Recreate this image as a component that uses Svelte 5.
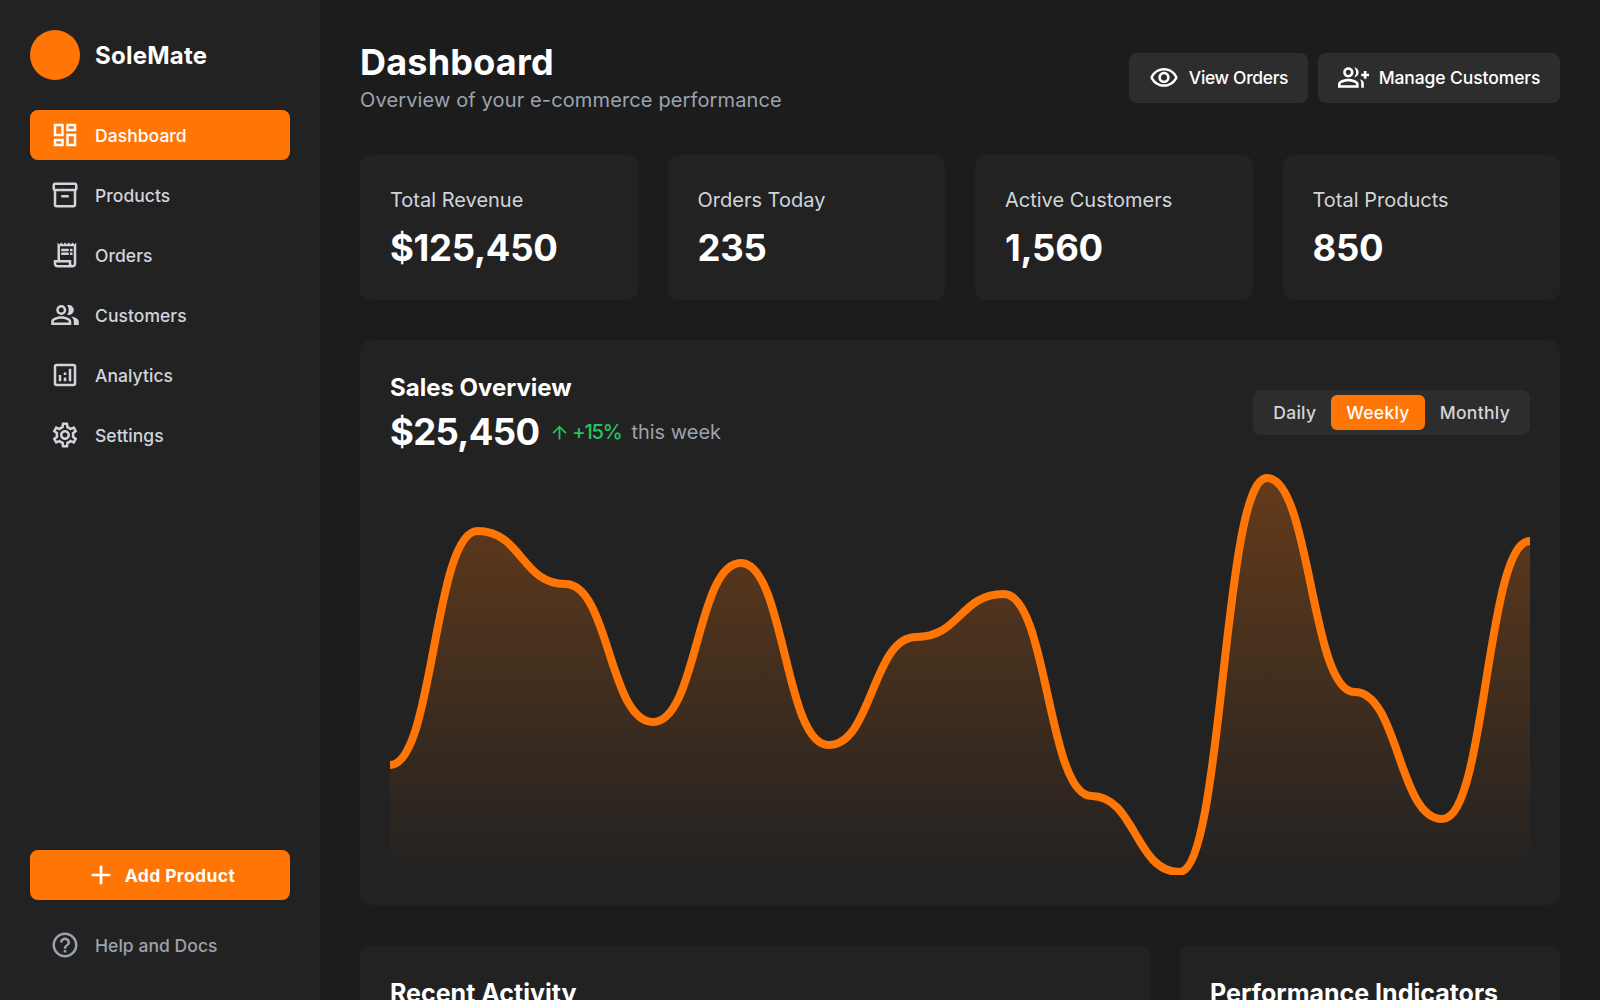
<script lang="ts">
  const points = [765, 531, 584, 722, 563, 745, 637, 594, 796, 872, 478, 692, 819, 541];
  const top = 470;
  const stepX = 1140 / 13;

  // material outlined glyphs, all on a 24 grid
  const icons: Record<string, string> = {
    dashboard: "M19 5v2h-4V5h4M9 5v6H5V5h4m10 8v6h-4v-6h4M9 17v2H5v-2h4M21 3h-8v6h8V3zM11 3H3v10h8V3zm10 8h-8v10h8V11zm-10 4H3v6h8v-6z",
    inventory: "M20 2H4c-1 0-2 .9-2 2v3.01c0 .72.43 1.34 1 1.69V20c0 1.1 1.1 2 2 2h14c.9 0 2-.9 2-2V8.7c.57-.35 1-.97 1-1.69V4c0-1.1-1-2-2-2zm-1 18H5V9h14v11zm1-13H4V4h16v3zM9 12h6v2H9z",
    receipt: "M19.5 3.5 18 2l-1.5 1.5L15 2l-1.5 1.5L12 2l-1.5 1.5L9 2 7.5 3.5 6 2v14H3v3c0 1.66 1.34 3 3 3h12c1.66 0 3-1.34 3-3V2l-1.5 1.5zM15 20H6c-.55 0-1-.45-1-1v-1h10v2zm4-1c0 .55-.45 1-1 1s-1-.45-1-1v-3H8V5h11v14zM9 7h6v2H9zM16 7h2v2h-2zM9 10h6v2H9zM16 10h2v2h-2z",
    group: "M16.67 13.13C18.04 14.06 19 15.32 19 17v3h4v-3c0-2.18-3.57-3.47-6.33-3.87zM9 4a4 4 0 1 0 0 8 4 4 0 0 0 0-8zm0 6a2 2 0 1 1 0-4 2 2 0 0 1 0 4zM15 12c2.21 0 4-1.79 4-4s-1.79-4-4-4c-.47 0-.91.1-1.33.24C14.5 5.27 15 6.58 15 8s-.5 2.73-1.33 3.76c.42.14.86.24 1.33.24zM9 13c-2.67 0-8 1.34-8 4v3h16v-3c0-2.66-5.33-4-8-4zm6 5H3v-.99C3.2 16.29 6.3 15 9 15s5.8 1.29 6 2v1z",
    analytics: "M19 3H5c-1.1 0-2 .9-2 2v14c0 1.1.9 2 2 2h14c1.1 0 2-.9 2-2V5c0-1.1-.9-2-2-2zm0 16H5V5h14v14zM7 12h2v5H7zM15 7h2v10h-2zM11 14h2v3h-2zM11 10h2v2h-2z",
    settings: "M19.43 12.98c.04-.32.07-.64.07-.98 0-.34-.03-.66-.07-.98l2.11-1.65c.19-.15.24-.42.12-.64l-2-3.46c-.09-.16-.26-.25-.44-.25-.06 0-.12.01-.17.03l-2.49 1c-.52-.4-1.08-.73-1.69-.98l-.38-2.65C14.46 2.18 14.25 2 14 2h-4c-.25 0-.46.18-.49.42l-.38 2.65c-.61.25-1.17.59-1.69.98l-2.49-1c-.06-.02-.12-.03-.18-.03-.17 0-.34.09-.43.25l-2 3.46c-.13.22-.07.49.12.64l2.11 1.65c-.04.32-.07.65-.07.98 0 .33.03.66.07.98l-2.11 1.65c-.19.15-.24.42-.12.64l2 3.46c.09.16.26.25.44.25.06 0 .12-.01.17-.03l2.49-1c.52.4 1.08.73 1.69.98l.38 2.65c.03.24.24.42.49.42h4c.25 0 .46-.18.49-.42l.38-2.65c.61-.25 1.17-.59 1.69-.98l2.49 1c.06.02.12.03.18.03.17 0 .34-.09.43-.25l2-3.46c.12-.22.07-.49-.12-.64l-2.11-1.65zm-1.98-1.71c.04.31.05.52.05.73 0 .21-.02.43-.05.73l-.14 1.13.89.7 1.08.84-.7 1.21-1.27-.51-1.04-.42-.9.68c-.43.32-.84.56-1.25.73l-1.06.43-.16 1.13-.2 1.35h-1.4l-.19-1.35-.16-1.13-1.06-.43c-.43-.18-.83-.41-1.23-.71l-.91-.7-1.06.43-1.27.51-.7-1.21 1.08-.84.89-.7-.14-1.13c-.03-.31-.05-.54-.05-.74s.02-.43.05-.73l.14-1.13-.89-.7-1.08-.84.7-1.21 1.27.51 1.04.42.9-.68c.43-.32.84-.56 1.25-.73l1.06-.43.16-1.13.2-1.35h1.39l.19 1.35.16 1.13 1.06.43c.43.18.83.41 1.23.71l.91.7 1.06-.43 1.27-.51.7 1.21-1.07.85-.89.7.14 1.13zM12 8c-2.21 0-4 1.79-4 4s1.79 4 4 4 4-1.79 4-4-1.79-4-4-4zm0 6c-1.1 0-2-.9-2-2s.9-2 2-2 2 .9 2 2-.9 2-2 2z",
    help: "M11 18h2v-2h-2v2zm1-16C6.48 2 2 6.48 2 12s4.48 10 10 10 10-4.48 10-10S17.52 2 12 2zm0 18c-4.41 0-8-3.59-8-8s3.59-8 8-8 8 3.59 8 8-3.59 8-8 8zm0-14c-2.21 0-4 1.79-4 4h2c0-1.1.9-2 2-2s2 .9 2 2c0 2-3 1.75-3 5h2c0-2.25 3-2.5 3-5 0-2.21-1.79-4-4-4z",
    add: "M19 13h-6v6h-2v-6H5v-2h6V5h2v6h6v2z",
    eye: "M12 6c3.79 0 7.17 2.13 8.82 5.5C19.17 14.87 15.79 17 12 17s-7.17-2.13-8.82-5.5C4.83 8.13 8.21 6 12 6m0-2C7 4 2.73 7.11 1 11.5 2.73 15.89 7 19 12 19s9.27-3.11 11-7.5C21.27 7.11 17 4 12 4zm0 5c1.38 0 2.5 1.12 2.5 2.5S13.38 14 12 14s-2.5-1.12-2.5-2.5S10.62 9 12 9m0-2c-2.48 0-4.5 2.02-4.5 4.5S9.52 16 12 16s4.5-2.02 4.5-4.5S14.48 7 12 7z",
    groupAdd: "M22 9V7h-2v2h-2v2h2v2h2v-2h2V9zM8 12c2.21 0 4-1.79 4-4s-1.79-4-4-4-4 1.79-4 4 1.79 4 4 4zm0-6c1.1 0 2 .9 2 2s-.9 2-2 2-2-.9-2-2 .9-2 2-2zM8 13c-2.67 0-8 1.34-8 4v3h16v-3c0-2.66-5.33-4-8-4zm6 5H2v-.99C2.2 16.29 5.3 15 8 15s5.8 1.29 6 2v1zM12.51 4.05C13.43 5.11 14 6.49 14 8s-.57 2.89-1.49 3.95C14.47 11.7 16 10.04 16 8s-1.53-3.7-3.49-3.95zM16.53 13.18C17.42 14.01 18 15.05 18 16.3V20h2v-3.7c0-1.45-1.59-2.51-3.47-3.12z",
    arrowUp: "M4 12l1.41 1.41L11 7.83V20h2V7.83l5.58 5.59L20 12l-8-8-8 8z",
  };

  const nav = [
    { label: "Dashboard", icon: "dashboard", active: true },
    { label: "Products", icon: "inventory" },
    { label: "Orders", icon: "receipt" },
    { label: "Customers", icon: "group" },
    { label: "Analytics", icon: "analytics" },
    { label: "Settings", icon: "settings" },
  ];

  const stats = [
    { label: "Total Revenue", value: "$125,450" },
    { label: "Orders Today", value: "235" },
    { label: "Active Customers", value: "1,560" },
    { label: "Total Products", value: "850" },
  ];

  const ranges = ["Daily", "Weekly", "Monthly"];

  function buildLine() {
    let d = `M0 ${points[0] - top}`;
    for (let i = 1; i < points.length; i++) {
      const x0 = (i - 1) * stepX;
      const x1 = i * stepX;
      const mid = (x0 + x1) / 2;
      d += ` C${mid.toFixed(1)} ${points[i - 1] - top} ${mid.toFixed(1)} ${points[i] - top} ${x1.toFixed(1)} ${points[i] - top}`;
    }
    return d;
  }

  const line = buildLine();
  const area = `${line} L1140 405 L0 405 Z`;
</script>

{#snippet icon(name: string, size = 30)}
  <svg viewBox="0 0 24 24" width={size} height={size} fill="currentColor"><path d={icons[name]} /></svg>
{/snippet}

<div class="layout">
  <aside class="sidebar">
    <div class="brand">
      <span class="logo"></span>
      <span class="brand-name">SoleMate</span>
    </div>

    <nav class="nav">
      {#each nav as item}
        <a class="nav-item" class:active={item.active} href="#top">
          {@render icon(item.icon)}
          <span>{item.label}</span>
        </a>
      {/each}
    </nav>

    <div class="side-bottom">
      <button class="add-btn">
        {@render icon("add", 32)}
        <span>Add Product</span>
      </button>
      <a class="nav-item help" href="#top">
        {@render icon("help")}
        <span>Help and Docs</span>
      </a>
    </div>
  </aside>

  <main class="main">
    <header class="page-head">
      <div class="page-title">
        <h1>Dashboard</h1>
        <p>Overview of your e-commerce performance</p>
      </div>
      <div class="head-actions">
        <button class="ghost-btn view">
          {@render icon("eye")}
          <span>View Orders</span>
        </button>
        <button class="ghost-btn manage">
          {@render icon("groupAdd", 31)}
          <span>Manage Customers</span>
        </button>
      </div>
    </header>

    <section class="stats">
      {#each stats as stat}
        <div class="card stat">
          <span class="stat-label">{stat.label}</span>
          <strong class="stat-value">{stat.value}</strong>
        </div>
      {/each}
    </section>

    <section class="card sales">
      <div class="sales-head">
        <div>
          <h2>Sales Overview</h2>
          <div class="sales-figure">
            <strong>$25,450</strong>
            <span class="trend">
              {@render icon("arrowUp", 21)}
              <span class="trend-value">+15%</span>
            </span>
            <span class="period">this week</span>
          </div>
        </div>
        <div class="range">
          {#each ranges as range}
            <button class:selected={range === "Weekly"}>{range}</button>
          {/each}
        </div>
      </div>

      <svg class="chart" viewBox="0 0 1140 405" preserveAspectRatio="none">
        <defs>
          <linearGradient id="salesFill" x1="0" y1="0" x2="0" y2="1">
            <stop offset="0" stop-color="#ff7506" stop-opacity="0.3" />
            <stop offset="1" stop-color="#ff7506" stop-opacity="0" />
          </linearGradient>
        </defs>
        <path d={area} fill="url(#salesFill)" />
        <path d={line} fill="none" stroke="#ff7506" stroke-width="8" />
      </svg>
    </section>

    <section class="bottom">
      <div class="card panel"><h2>Recent Activity</h2></div>
      <div class="card panel"><h2>Performance Indicators</h2></div>
    </section>
  </main>
</div>

<style>
  :global(body) {
    margin: 0;
    background: #1c1c1c;
    overflow: hidden;
  }

  .layout {
    display: flex;
    height: 1000px;
    overflow: hidden;
    font-family: Inter, "Liberation Sans", sans-serif;
    color: #fff;
  }

  .sidebar {
    width: 320px;
    flex: none;
    box-sizing: border-box;
    padding: 30px;
    background: #222;
    display: flex;
    flex-direction: column;
  }

  .brand {
    display: flex;
    align-items: center;
    gap: 15px;
    margin-bottom: 30px;
  }

  .logo {
    width: 50px;
    height: 50px;
    border-radius: 50%;
    background: #ff7506;
  }

  .brand-name {
    font-size: 24px;
    font-weight: 700;
    letter-spacing: 0.25px;
  }

  .nav {
    display: flex;
    flex-direction: column;
    gap: 10px;
  }

  .nav-item {
    height: 50px;
    display: flex;
    align-items: center;
    gap: 15px;
    padding: 0 20px;
    border-radius: 8px;
    color: #d1d5db;
    font-size: 17.5px;
    font-weight: 500;
    letter-spacing: 0.05px;
    text-decoration: none;
  }

  .nav-item.active {
    background: #ff7506;
    color: #fff;
  }

  .side-bottom {
    margin-top: auto;
    display: flex;
    flex-direction: column;
    gap: 20px;
  }

  .add-btn {
    height: 50px;
    border: 0;
    border-radius: 8px;
    background: #ff7506;
    color: #fff;
    display: flex;
    align-items: center;
    justify-content: center;
    gap: 8px;
    font: 700 17.5px Inter, "Liberation Sans", sans-serif;
    letter-spacing: 0.4px;
  }

  .help {
    color: #9ca3af;
  }

  .main {
    flex: 1;
    min-width: 0;
    padding: 40px;
    display: flex;
    flex-direction: column;
    gap: 40px;
  }

  .main > * {
    flex: none;
  }

  .page-head {
    display: flex;
    justify-content: space-between;
    align-items: center;
    height: 75px;
  }

  .page-title {
    align-self: flex-start;
  }

  h1 {
    margin: 0;
    font-size: 36px;
    line-height: 44px;
    font-weight: 700;
    letter-spacing: 0.2px;
  }

  .page-title p {
    margin: 4px 0 0;
    font-size: 20px;
    letter-spacing: 0.13px;
    color: #9ca3af;
  }

  .head-actions {
    display: flex;
    gap: 10px;
  }

  .ghost-btn {
    height: 50px;
    padding: 0;
    border: 0;
    border-radius: 8px;
    background: #2d2d2d;
    color: #fff;
    display: flex;
    align-items: center;
    justify-content: center;
    gap: 10px;
    font: 500 17.5px Inter, "Liberation Sans", sans-serif;
    letter-spacing: -0.1px;
  }

  .ghost-btn.view {
    width: 179px;
    letter-spacing: -0.35px;
  }

  .ghost-btn.manage {
    width: 242px;
  }

  .stats {
    display: grid;
    grid-template-columns: repeat(4, 1fr);
    gap: 30px;
  }

  .card {
    background: #222;
    border-radius: 10px;
  }

  .stat {
    height: 145px;
    box-sizing: border-box;
    padding: 30px;
    display: flex;
    flex-direction: column;
    gap: 11px;
  }

  .stat-label {
    font-size: 20px;
    line-height: 30px;
    color: #d1d5db;
  }

  .stat-value {
    font-size: 36.5px;
    line-height: 44px;
    font-weight: 700;
    letter-spacing: -0.3px;
  }

  .sales {
    height: 565px;
    box-sizing: border-box;
    padding: 30px;
    display: flex;
    flex-direction: column;
    gap: 12px;
  }

  .sales-head {
    display: flex;
    justify-content: space-between;
    align-items: flex-start;
  }

  h2 {
    margin: 0;
    font-size: 24px;
    line-height: 36px;
    font-weight: 700;
  }

  .sales-figure {
    height: 52px;
    display: flex;
    align-items: center;
    gap: 10px;
  }

  .sales-figure strong {
    font-size: 36.5px;
    font-weight: 700;
    letter-spacing: -0.7px;
  }

  .trend {
    display: flex;
    align-items: center;
    gap: 2px;
    color: #22c55e;
    font-size: 20px;
    font-weight: 500;
  }

  .trend-value {
    letter-spacing: -1.2px;
  }

  .period {
    font-size: 20px;
    color: #9ca3af;
  }

  .range {
    display: flex;
    margin-top: 20px;
    padding: 5px;
    border-radius: 8px;
    background: #2d2d2d;
  }

  .range button {
    height: 35px;
    padding: 0 15px;
    border: 0;
    border-radius: 6px;
    background: none;
    color: #d1d5db;
    font: 500 17.5px Inter, "Liberation Sans", sans-serif;
    letter-spacing: 0.3px;
  }

  .range button.selected {
    background: #ff7506;
    color: #fff;
  }

  .chart {
    display: block;
    width: 100%;
    height: 405px;
    flex: none;
  }

  .bottom {
    display: grid;
    grid-template-columns: 790px 380px;
    gap: 30px;
  }

  .panel {
    padding: 30px;
    height: 300px;
  }

  .panel h2 {
    font-size: 25px;
  }
</style>
